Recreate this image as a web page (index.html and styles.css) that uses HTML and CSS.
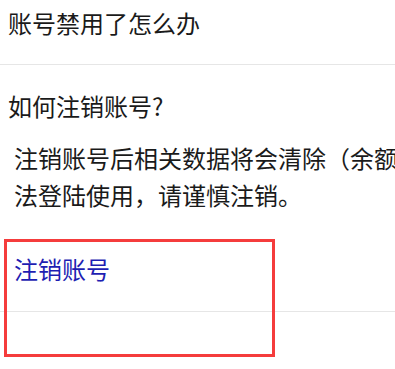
FILE: index.html
```html
<!DOCTYPE html>
<html lang="zh-CN">
<head>
<meta charset="utf-8">
<link rel="stylesheet" href="styles.css">
</head>
<body>
<div class="page">
  <div class="row row-first">
    <div class="title">账号禁用了怎么办</div>
  </div>
  <div class="row row-second">
    <div class="title">如何注销账号?</div>
    <div class="para-wrap">
      <p class="para">注销账号后相关数据将会清除（余额清零），无法登陆使用，请谨慎注销。</p>
    </div>
    <div class="link">注销账号</div>
  </div>
  <div class="mark-box"></div>
</div>
</body>
</html>
```
FILE: styles.css
```css
html, body {
  margin: 0;
  padding: 0;
  background: #ffffff;
  overflow: hidden;
}
body {
  font-family: "Noto Sans CJK SC", "Noto Sans", sans-serif;
  font-size: 24px;
  color: #1a1a1a;
}
.page {
  position: relative;
  width: 395px;
  height: 369px;
  overflow: hidden;
}
.row {
  border-bottom: 1px solid #e6e6e6;
}
.row-first {
  height: 60px;
  padding-top: 4px;
  box-sizing: content-box;
}
.title {
  line-height: 37px;
  padding-left: 8px;
  white-space: nowrap;
}
.row-second {
  padding-top: 22px;
  padding-bottom: 24px;
}
.para-wrap {
  margin-top: 15px;
  padding-left: 14px;
  overflow: hidden;
}
.para {
  margin: 0;
  width: 504px;
  line-height: 37px;
}
.link {
  margin-top: 37px;
  padding-left: 14px;
  line-height: 37px;
  color: #1e1eb2;
}
.mark-box {
  position: absolute;
  left: 4px;
  top: 239px;
  width: 265px;
  height: 112px;
  border: 3px solid #f53c3c;
}
```
